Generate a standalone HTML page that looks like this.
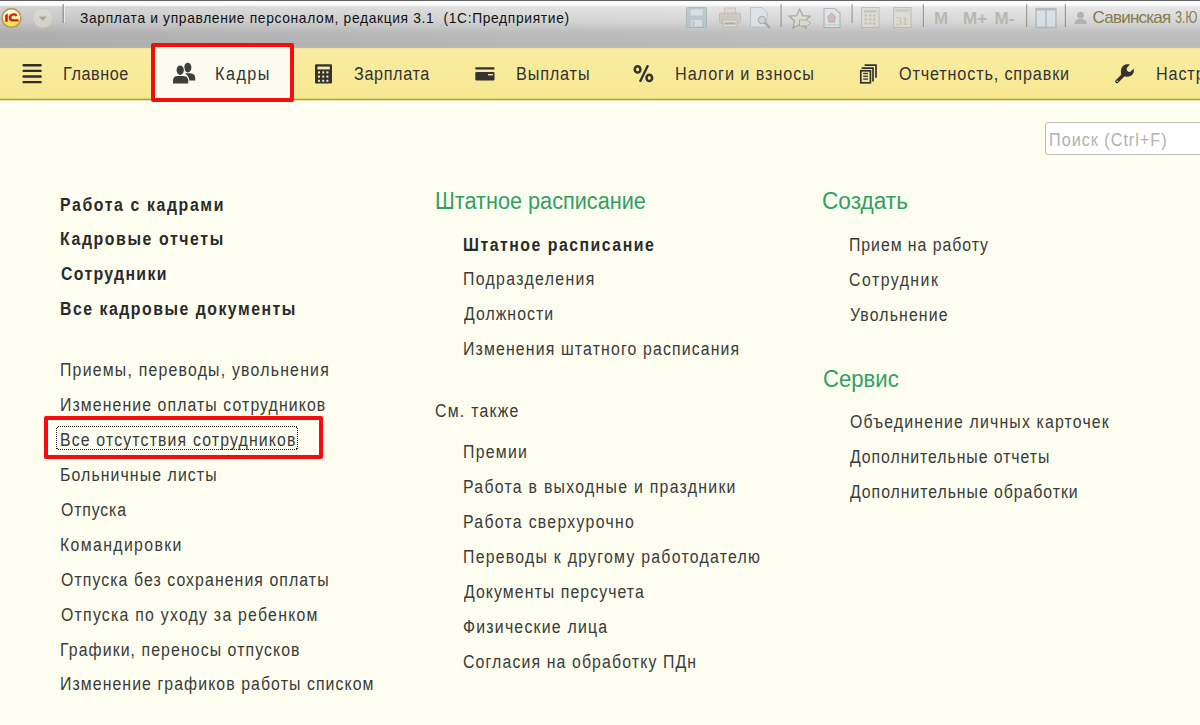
<!DOCTYPE html>
<html><head><meta charset="utf-8">
<style>
html,body{margin:0;padding:0;}
body{width:1200px;height:725px;overflow:hidden;position:relative;background:#fdfeef;font-family:"Liberation Sans",sans-serif;}
.a{position:absolute;white-space:nowrap;}
.r{font-size:18px;line-height:18px;color:#3a3a3a;}
.b{font-size:18px;line-height:18px;font-weight:bold;color:#2a2a2a;}
.g{font-size:23px;line-height:23px;color:#30a064;}
.n{font-size:18px;line-height:18px;color:#333;}
.t{font-size:15px;line-height:15px;color:#111;}
.u{font-size:17px;line-height:17px;color:#857c4a;}
.s{font-size:18px;line-height:18px;color:#b2b2b0;}
#title{position:absolute;left:0;top:0;width:1200px;height:48px;background:linear-gradient(#5a5a5a 0,#6a6a6a 1px,#fbfbfb 1.5px,#fbfbfb 5px,#e6e6e6 7px,#d6d6d6 22px,#c6c7c6 29px,#bebfbe 33px,#babbba 46px,#c8c2a8 48px);}
#nav{position:absolute;left:0;top:48px;width:1200px;height:53px;background:linear-gradient(#f1e4a8 0,#f9eca4 2px,#f9eb9c 20px,#f8e894 48px,#fbec8c 49px,#f8e67c 50px,#b4a446 51.5px,#dcd4a4 52.3px,#fbfbe8 53px);}
</style></head><body>
<div id="title"></div>
<div class="a" style="left:0;top:6px;width:1200px;height:42px;background:linear-gradient(90deg,rgba(0,0,0,0.085) 0,rgba(0,0,0,0.05) 250px,rgba(0,0,0,0.025) 500px,rgba(0,0,0,0) 850px);"></div>
<div id="nav"></div>
<!-- active tab -->
<div class="a" style="left:151px;top:43px;width:135px;height:50.5px;border:4px solid #f50c0c;border-radius:2px;background:#fbfbf0;"></div>

<svg class="a" style="left:0;top:0" width="1200" height="110" viewBox="0 0 1200 110">
<!-- 1C logo -->
<defs>
<linearGradient id="lg1" x1="0" y1="0" x2="0" y2="1"><stop offset="0" stop-color="#fffbe0"/><stop offset="0.55" stop-color="#fff3a0"/><stop offset="1" stop-color="#f6d820"/></linearGradient>
<linearGradient id="dd" x1="0" y1="0" x2="0" y2="1"><stop offset="0" stop-color="#dedcd2"/><stop offset="1" stop-color="#d2d0c4"/></linearGradient>
</defs>
<circle cx="11.4" cy="18" r="9.4" fill="url(#lg1)" stroke="#b89868" stroke-width="1.6"/>
<path d="M4.8 15.4 L7.8 13.6 L7.8 21.8 L5.2 21.8 L5.2 16.6 L4.8 16.8 Z" fill="#d8200c"/>
<path d="M17.6 15.4 C16.6 13.4 14.4 13 12.4 13.4 C9.6 14 8.4 16.4 8.8 18.6 C9.2 20.8 11 21.6 13 21.6 L18.6 21.6 L18.6 19.2 L13.2 19.2 C12 19.2 11.4 18.6 11.4 17.6 C11.4 16.4 12.4 15.6 13.6 15.6 C14.6 15.6 15.2 16 15.6 16.6 Z" fill="#d8200c"/>
<!-- dropdown circle -->
<circle cx="42.7" cy="18" r="9.6" fill="url(#dd)" stroke="#cfcdc3" stroke-width="0.8"/>
<path d="M38.6 16.6 L47 16.6 L42.8 21 Z" fill="#aaa69a"/>
<!-- separator -->
<rect x="62.6" y="4" width="1.2" height="19" fill="#7a7a7a"/>
<rect x="63.8" y="4" width="1" height="19" fill="#f4f4f4"/>
<g opacity="0.78"><!-- save -->
<rect x="686.5" y="7.5" width="20" height="20" rx="1" fill="#b3c4cb" stroke="#9fb0b8" stroke-width="1"/>
<rect x="690" y="9" width="13" height="7" fill="#d4dfe3" stroke="#a9bac1" stroke-width="0.6"/>
<rect x="691" y="20" width="11" height="6.5" fill="#d8e0e4"/>
<rect x="692.5" y="21" width="2" height="5" fill="#aebcc2"/>
<!-- print -->
<rect x="724.5" y="8" width="11" height="7" fill="#dcd8d2" stroke="#bdb6ae" stroke-width="0.8"/>
<rect x="719.5" y="13" width="21" height="10" rx="1.5" fill="#cbc4bc" stroke="#b5ada4" stroke-width="0.8"/>
<rect x="723" y="20" width="14" height="7" fill="#e2ddd6" stroke="#b5ada4" stroke-width="0.8"/>
<rect x="724.5" y="22.5" width="11" height="2" fill="#a8a098"/>
<!-- preview -->
<path d="M750.5 7.5 L762 7.5 L767 12.5 L767 27 L750.5 27 Z" fill="#dfe3e8" stroke="#b8bcc0" stroke-width="1"/>
<circle cx="762" cy="20" r="3.6" fill="#c9d4e0" stroke="#b0a49a" stroke-width="1.4"/>
<path d="M764.5 22.5 L770 28" stroke="#a89e96" stroke-width="2.4"/>
<!-- separator -->
<rect x="780.5" y="4" width="1.2" height="23" fill="#8a8a8a"/>
<!-- star -->
<path d="M799.6 9 L802.6 15.6 L810 16.2 L804.6 21 L806.2 28 L799.6 24.4 L793 28 L794.6 21 L789.2 16.2 L796.6 15.6 Z" fill="#dcdfd0" stroke="#9a9c92" stroke-width="1.3"/>
<path d="M799.5 20 L806.5 20 L810.5 23 L806.5 26 L799.5 26 Z" fill="#d4dec8" stroke="#9ea692" stroke-width="1"/>
<!-- bookmark doc -->
<path d="M824 8.5 L835 8.5 L840 13.5 L840 27.5 L824 27.5 Z" fill="#dfe5ea" stroke="#a2aeb6" stroke-width="1.2"/>
<path d="M831.6 13 L835.4 16.6 L834.4 22.2 L828.8 22.2 L827.8 16.6 Z" fill="#c8b6b0" stroke="#ab9c98" stroke-width="0.8"/>
<rect x="825.5" y="24" width="13" height="1.4" fill="#bcd6dc"/>
<!-- separator -->
<rect x="851.5" y="4" width="1.2" height="19" fill="#8a8a8a"/>
<!-- calculator -->
<rect x="861.5" y="7.5" width="17.5" height="20" fill="#dcdcd0" stroke="#b4b8b0" stroke-width="1"/>
<rect x="864" y="10" width="12.5" height="2.5" fill="#b8c0b4"/>
<g fill="#c0b4ac"><rect x="864.5" y="14.5" width="2.5" height="2"/><rect x="868.8" y="14.5" width="2.5" height="2"/><rect x="873" y="14.5" width="2.5" height="2"/>
<rect x="864.5" y="18.5" width="2.5" height="2"/><rect x="868.8" y="18.5" width="2.5" height="2"/><rect x="873" y="18.5" width="2.5" height="2"/>
<rect x="864.5" y="22.5" width="2.5" height="2"/><rect x="868.8" y="22.5" width="2.5" height="2"/><rect x="873" y="22.5" width="2.5" height="2"/></g>
<!-- calendar -->
<rect x="893.5" y="7.5" width="17.5" height="20" fill="#dcdcd0" stroke="#b4b8b0" stroke-width="1"/>
<rect x="895" y="9" width="14" height="3" fill="#c8c8bc"/>
<text x="896" y="25" font-family="Liberation Serif" font-size="12" fill="#c4aca0">31</text>
<!-- separator -->
<rect x="922.8" y="4" width="1.2" height="23" fill="#8a8a8a"/>
<!-- M M+ M- -->
<text x="934" y="24" font-family="Liberation Sans" font-weight="bold" font-size="17" fill="#b0ada6">M</text>
<text x="963" y="24" font-family="Liberation Sans" font-weight="bold" font-size="17" fill="#b0ada6">M+</text>
<text x="994.5" y="24" font-family="Liberation Sans" font-weight="bold" font-size="17" fill="#b0ada6">M-</text>
<!-- separator -->
<rect x="1026" y="4" width="1.2" height="23" fill="#8a8a8a"/>
<!-- panel -->
<rect x="1036" y="8.5" width="20" height="19" fill="#d8e2e8" stroke="#a4b0b6" stroke-width="1.4"/>
<rect x="1036" y="8.5" width="20" height="2" fill="#a4b0b6"/>
<rect x="1045.3" y="9" width="1.4" height="18" fill="#a4b0b6"/>
<!-- separator -->
<rect x="1064.8" y="4" width="1.2" height="23" fill="#8a8a8a"/>
<!-- user -->
<circle cx="1080.5" cy="15.2" r="3.4" fill="#a8a8a4"/>
<path d="M1074.5 24 C1074.5 20 1077 19 1080.5 19 C1084 19 1086.7 20 1086.7 24 Z" fill="#a8a8a4"/>

</g>
<!-- NAV ICONS -->
<g fill="#2e2e2e">
<rect x="22.5" y="64" width="19.2" height="2.4" rx="0.8"/>
<rect x="22.5" y="69.7" width="19.2" height="2.4" rx="0.8"/>
<rect x="22.5" y="75.3" width="19.2" height="2.4" rx="0.8"/>
<rect x="22.5" y="80.9" width="19.2" height="2.4" rx="0.8"/>
</g>
<!-- people -->
<g fill="#3f3f3a">
<ellipse cx="187.8" cy="67.6" rx="3.6" ry="4.9"/>
<path d="M185 73.2 L190.5 73.2 C193.5 73.6 195.2 75 195.2 77.5 L195.2 80.6 L187.5 80.6 L187.5 75.6 Z"/>
</g>
<ellipse cx="180.2" cy="70.2" rx="4.6" ry="5.8" fill="#fbfbf0"/>
<path d="M171.8 84.5 L171.8 80 C171.8 76.6 174.5 75 177.5 75 L183.5 75 C186.8 75 189.2 76.6 189.2 80 L189.2 84.5 Z" fill="#fbfbf0"/>
<g fill="#3f3f3a">
<ellipse cx="180.2" cy="70.2" rx="3.6" ry="4.8"/>
<path d="M173 83.5 L173 80.2 C173 77.6 175 76 177.8 76 L183.2 76 C186 76 188.2 77.6 188.2 80.2 L188.2 83.5 Z"/>
</g>
<!-- calculator -->
<rect x="315" y="64.2" width="17" height="19.4" rx="1" fill="#333"/>
<rect x="317.4" y="66.6" width="12.4" height="2.8" fill="#f9eda8"/>
<g fill="#f9eda8">
<rect x="318" y="71.4" width="2" height="2"/><rect x="322.2" y="71.4" width="2" height="2"/><rect x="326.4" y="71.4" width="2" height="2"/>
<rect x="318" y="75.6" width="2" height="2"/><rect x="322.2" y="75.6" width="2" height="2"/><rect x="326.4" y="75.6" width="2" height="2"/>
<rect x="318" y="79.8" width="2" height="2"/><rect x="322.2" y="79.8" width="2" height="2"/><rect x="326.4" y="79.8" width="2" height="2"/>
</g>
<!-- card -->
<rect x="475.3" y="67.3" width="19.2" height="2.2" rx="0.6" fill="#333"/>
<rect x="475.3" y="72.1" width="19.2" height="8.5" rx="1" fill="#333"/>
<rect x="488" y="74" width="5" height="1.4" fill="#f7e9a2"/>
<!-- percent -->
<ellipse cx="637.6" cy="69.4" rx="2.8" ry="3.2" fill="none" stroke="#333" stroke-width="2.5"/>
<ellipse cx="649.3" cy="77.9" rx="2.8" ry="3.1" fill="none" stroke="#333" stroke-width="2.5"/>
<path d="M648 65.2 L640 81.8" stroke="#333" stroke-width="2.4"/>
<!-- reports -->
<g fill="none" stroke="#333" stroke-width="1.7">
<path d="M864.6 65.2 L876 65.2 L876 77.8"/>
<path d="M861.6 68.2 L873 68.2 L873 81.6"/>
<rect x="860.8" y="70.8" width="9.6" height="12"/>
</g>
<g fill="#333"><rect x="863.2" y="72.8" width="4.8" height="1.3"/><rect x="863.2" y="75.6" width="4.8" height="1.3"/><rect x="863.2" y="78.4" width="4.8" height="1.3"/></g>
<!-- wrench -->
<path d="M1121.4 75 C1120.4 71.6 1120.8 67.8 1123.2 65.8 C1125 64.4 1127.4 64.1 1129.9 64.5 L1126.6 68.2 C1126.6 70.6 1127.8 72.2 1130 72 L1133.8 68.8 C1134.4 71.8 1133.2 74.6 1130.6 76 C1128.6 77 1126 77 1124.4 76.2 Z" fill="#333"/>
<line x1="1116.9" y1="81.5" x2="1123.6" y2="74.8" stroke="#333" stroke-width="3.4" stroke-linecap="round"/>
<circle cx="1117.2" cy="81.2" r="0.7" fill="#fff8d0"/>
</svg>
<div class="a" style="left:1045px;top:122px;width:170px;height:31px;border:1px solid #bdbdb5;border-radius:3px;background:#fff;"></div>

<div class="a t" style="left:79.50px;top:9.60px;letter-spacing:0.721px;transform:scaleX(0.9200);transform-origin:0 0">Зарплата и управление персоналом, редакция 3.1&nbsp; (1С:Предприятие)</div>
<div class="a u" style="left:1092.50px;top:8.60px;letter-spacing:-0.763px">Савинская</div>
<div class="a u" style="left:1175.40px;top:8.60px;letter-spacing:0.000px;transform:scaleX(0.6930);transform-origin:0 0">З.Ю</div>
<div class="a n" style="left:63.00px;top:64.70px;letter-spacing:0.615px;transform:scaleX(0.9000);transform-origin:0 0">Главное</div>
<div class="a n" style="left:214.80px;top:64.80px;letter-spacing:1.656px;transform:scaleX(0.9000);transform-origin:0 0">Кадры</div>
<div class="a n" style="left:354.00px;top:64.60px;letter-spacing:0.689px;transform:scaleX(0.9000);transform-origin:0 0">Зарплата</div>
<div class="a n" style="left:515.70px;top:64.60px;letter-spacing:0.952px;transform:scaleX(0.9000);transform-origin:0 0">Выплаты</div>
<div class="a n" style="left:674.70px;top:64.60px;letter-spacing:1.033px;transform:scaleX(0.9000);transform-origin:0 0">Налоги и взносы</div>
<div class="a n" style="left:899.20px;top:64.60px;letter-spacing:0.940px;transform:scaleX(0.9000);transform-origin:0 0">Отчетность, справки</div>
<div class="a n" style="left:1155.50px;top:64.60px;letter-spacing:0.950px;transform:scaleX(0.9000);transform-origin:0 0">Настройки</div>
<div class="a s" style="left:1049.00px;top:131.30px;letter-spacing:1.096px;transform:scaleX(0.9000);transform-origin:0 0">Поиск (Ctrl+F)</div>
<div class="a b" style="left:60.25px;top:195.50px;letter-spacing:1.838px;transform:scaleX(0.8800);transform-origin:0 0">Работа с кадрами</div>
<div class="a b" style="left:60.25px;top:230.40px;letter-spacing:1.826px;transform:scaleX(0.8800);transform-origin:0 0">Кадровые отчеты</div>
<div class="a b" style="left:61.25px;top:265.30px;letter-spacing:1.521px;transform:scaleX(0.8800);transform-origin:0 0">Сотрудники</div>
<div class="a b" style="left:60.25px;top:300.20px;letter-spacing:1.710px;transform:scaleX(0.8800);transform-origin:0 0">Все кадровые документы</div>
<div class="a r" style="left:60.25px;top:361.30px;letter-spacing:1.382px;transform:scaleX(0.8800);transform-origin:0 0">Приемы, переводы, увольнения</div>
<div class="a r" style="left:60.25px;top:396.20px;letter-spacing:1.235px;transform:scaleX(0.8800);transform-origin:0 0">Изменение оплаты сотрудников</div>
<div class="a r" style="left:60.25px;top:431.10px;letter-spacing:1.314px;transform:scaleX(0.8800);transform-origin:0 0">Все отсутствия сотрудников</div>
<div class="a r" style="left:60.25px;top:466.00px;letter-spacing:1.241px;transform:scaleX(0.8800);transform-origin:0 0">Больничные листы</div>
<div class="a r" style="left:61.25px;top:500.90px;letter-spacing:0.979px;transform:scaleX(0.8800);transform-origin:0 0">Отпуска</div>
<div class="a r" style="left:60.25px;top:535.80px;letter-spacing:1.545px;transform:scaleX(0.8800);transform-origin:0 0">Командировки</div>
<div class="a r" style="left:61.25px;top:570.70px;letter-spacing:1.223px;transform:scaleX(0.8800);transform-origin:0 0">Отпуска без сохранения оплаты</div>
<div class="a r" style="left:61.25px;top:605.60px;letter-spacing:1.410px;transform:scaleX(0.8800);transform-origin:0 0">Отпуска по уходу за ребенком</div>
<div class="a r" style="left:60.25px;top:640.50px;letter-spacing:1.236px;transform:scaleX(0.8800);transform-origin:0 0">Графики, переносы отпусков</div>
<div class="a r" style="left:60.25px;top:675.40px;letter-spacing:1.224px;transform:scaleX(0.8800);transform-origin:0 0">Изменение графиков работы списком</div>
<div class="a g" style="left:434.60px;top:190.20px;letter-spacing:0.000px;transform:scaleX(0.9415);transform-origin:0 0">Штатное расписание</div>
<div class="a b" style="left:462.90px;top:235.50px;letter-spacing:1.709px;transform:scaleX(0.8800);transform-origin:0 0">Штатное расписание</div>
<div class="a r" style="left:462.50px;top:270.40px;letter-spacing:1.520px;transform:scaleX(0.8800);transform-origin:0 0">Подразделения</div>
<div class="a r" style="left:463.50px;top:305.30px;letter-spacing:1.177px;transform:scaleX(0.8800);transform-origin:0 0">Должности</div>
<div class="a r" style="left:462.50px;top:340.20px;letter-spacing:1.304px;transform:scaleX(0.8800);transform-origin:0 0">Изменения штатного расписания</div>
<div class="a r" style="left:434.70px;top:401.90px;letter-spacing:1.424px;transform:scaleX(0.8800);transform-origin:0 0">См. также</div>
<div class="a r" style="left:462.50px;top:443.30px;letter-spacing:1.418px;transform:scaleX(0.8800);transform-origin:0 0">Премии</div>
<div class="a r" style="left:462.50px;top:478.20px;letter-spacing:1.444px;transform:scaleX(0.8800);transform-origin:0 0">Работа в выходные и праздники</div>
<div class="a r" style="left:462.50px;top:513.00px;letter-spacing:1.455px;transform:scaleX(0.8800);transform-origin:0 0">Работа сверхурочно</div>
<div class="a r" style="left:462.50px;top:547.90px;letter-spacing:1.431px;transform:scaleX(0.8800);transform-origin:0 0">Переводы к другому работодателю</div>
<div class="a r" style="left:463.50px;top:582.80px;letter-spacing:1.219px;transform:scaleX(0.8800);transform-origin:0 0">Документы персучета</div>
<div class="a r" style="left:462.50px;top:617.60px;letter-spacing:1.390px;transform:scaleX(0.8800);transform-origin:0 0">Физические лица</div>
<div class="a r" style="left:462.50px;top:652.50px;letter-spacing:1.283px;transform:scaleX(0.8800);transform-origin:0 0">Согласия на обработку ПДн</div>
<div class="a g" style="left:821.90px;top:190.10px;letter-spacing:0.000px;transform:scaleX(0.9839);transform-origin:0 0">Создать</div>
<div class="a r" style="left:848.80px;top:235.70px;letter-spacing:1.084px;transform:scaleX(0.8800);transform-origin:0 0">Прием на работу</div>
<div class="a r" style="left:848.80px;top:270.60px;letter-spacing:1.694px;transform:scaleX(0.8800);transform-origin:0 0">Сотрудник</div>
<div class="a r" style="left:849.80px;top:305.50px;letter-spacing:1.290px;transform:scaleX(0.8800);transform-origin:0 0">Увольнение</div>
<div class="a g" style="left:822.70px;top:367.50px;letter-spacing:0.000px;transform:scaleX(0.9619);transform-origin:0 0">Сервис</div>
<div class="a r" style="left:849.80px;top:412.90px;letter-spacing:1.319px;transform:scaleX(0.8800);transform-origin:0 0">Объединение личных карточек</div>
<div class="a r" style="left:849.80px;top:447.90px;letter-spacing:1.058px;transform:scaleX(0.8800);transform-origin:0 0">Дополнительные отчеты</div>
<div class="a r" style="left:849.80px;top:482.70px;letter-spacing:1.075px;transform:scaleX(0.8800);transform-origin:0 0">Дополнительные обработки</div>
<svg class="a" style="left:0;top:0" width="400" height="500" viewBox="0 0 400 500"><g stroke="#1e1e1e" stroke-width="1" stroke-dasharray="1 1" fill="none"><path d="M58 426.5 H297"/><path d="M58 449.5 H297"/><path d="M56.5 428 V449"/><path d="M297.5 428 V449"/></g><g fill="#1e1e1e"><rect x="57" y="427" width="1" height="1"/><rect x="296" y="427" width="1" height="1"/><rect x="57" y="448" width="1" height="1"/><rect x="296" y="448" width="1" height="1"/></g></svg>
<div class="a" style="left:44px;top:416px;width:271px;height:35px;border:4px solid #f50c0c;border-radius:2px;"></div>

</body></html>
